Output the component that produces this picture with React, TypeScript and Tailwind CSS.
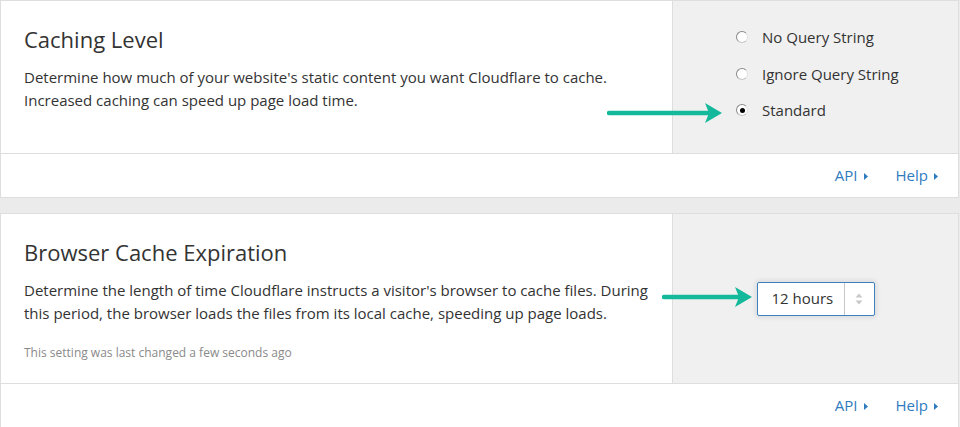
import React from 'react';

const font = { fontFamily: '"Open Sans", "Liberation Sans", sans-serif' };

const Caret = () => (
  <svg width="4" height="7" viewBox="0 0 4 7" className="ml-[6px] mt-[2px]">
    <path d="M0 0 L4 3.5 L0 7 Z" fill="#2f7bbf" />
  </svg>
);

const Footer = () => (
  <div className="h-[44px] border-t border-[#dedede] bg-white flex items-center justify-end pr-[20px] gap-[28px] text-[15px] text-[#2f7bbf]">
    <a className="flex items-center">API<Caret /></a>
    <a className="flex items-center">Help<Caret /></a>
  </div>
);

const Radio = ({ checked, label }: { checked?: boolean; label: string }) => (
  <label className="flex items-center h-[36.5px] gap-[14px] text-[15px] text-[#333]">
    <span className="w-[12px] h-[12px] rounded-full bg-white border border-t-[#8a8a8a] border-l-[#8a8a8a] border-b-[#c4c4c4] border-r-[#e2e2e2] flex items-center justify-center">
      {checked && <span className="w-[5px] h-[5px] rounded-full bg-black" />}
    </span>
    {label}
  </label>
);

const Arrow = ({ x1, x2, y }: { x1: number; x2: number; y: number }) => {
  const w = x2 - x1;
  return (
    <svg
      className="absolute pointer-events-none"
      style={{ left: x1, top: y - 11, width: w + 2, height: 22 }}
      viewBox={`0 0 ${w + 2} 22`}
    >
      <line x1="2" y1="11" x2={w - 12} y2="11" stroke="#14b89a" strokeWidth="4.5" strokeLinecap="round" />
      <path d={`M${w} 11 L${w - 17} 1 L${w - 13} 11 L${w - 17} 21 Z`} fill="#14b89a" />
    </svg>
  );
};

export default function App() {
  return (
    <div className="relative w-[960px] h-[427px] bg-[#ebebeb] overflow-hidden" style={font}>
      {/* Caching Level */}
      <div className="w-[959px] border border-[#dedede] bg-white">
        <div className="flex h-[152px]">
          <div className="w-[671px] pl-[23px] pt-[25px]">
            <h2 className="text-[22px] leading-[26px] text-[#333]">Caching Level</h2>
            <p className="mt-[14px] text-[15px] leading-[23px] text-[#333] whitespace-nowrap">
              Determine how much of your website's static content you want Cloudflare to cache.
              <br />
              Increased caching can speed up page load time.
            </p>
          </div>
          <div className="flex-1 border-l border-[#dedede] bg-[#f0f0f0] pl-[63px] pt-[18px]">
            <div className="flex flex-col">
              <Radio label="No Query String" />
              <Radio label="Ignore Query String" />
              <Radio checked label="Standard" />
            </div>
          </div>
        </div>
        <Footer />
      </div>

      {/* Browser Cache Expiration */}
      <div className="mt-[15px] w-[959px] border border-[#dedede] bg-white">
        <div className="flex h-[169px]">
          <div className="w-[671px] pl-[23px] pt-[25px]">
            <h2 className="text-[22px] leading-[26px] text-[#333]">Browser Cache Expiration</h2>
            <p className="mt-[14px] text-[15px] leading-[23px] text-[#333] whitespace-nowrap">
              Determine the length of time Cloudflare instructs a visitor's browser to cache files. During
              <br />
              this period, the browser loads the files from its local cache, speeding up page loads.
            </p>
            <p className="mt-[19px] text-[12px] leading-[18px] text-[#8a8a8a]">
              This setting was last changed a few seconds ago
            </p>
          </div>
          <div className="flex-1 border-l border-[#dedede] bg-[#f0f0f0] flex items-center justify-center">
            <div className="flex h-[34px] w-[118px] bg-white border border-[#3d7fc1] rounded-[2px] shadow-[0_0_4px_2px_rgba(0,0,0,0.08)] text-[15px] text-[#333]">
              <div className="w-[86px] flex items-center pl-[14px]">12 hours</div>
              <div className="flex-1 border-l border-[#c8c8c8] flex items-center justify-center">
                <svg width="8" height="12" viewBox="0 0 8 12">
                  <path d="M4 0.5 L7.5 4.5 L0.5 4.5 Z" fill="#c9c9c9" />
                  <path d="M4 11.5 L7.5 7.5 L0.5 7.5 Z" fill="#c9c9c9" />
                </svg>
              </div>
            </div>
          </div>
        </div>
        <Footer />
      </div>

      <Arrow x1={607} x2={722} y={113} />
      <Arrow x1={662} x2={752} y={297} />
    </div>
  );
}
